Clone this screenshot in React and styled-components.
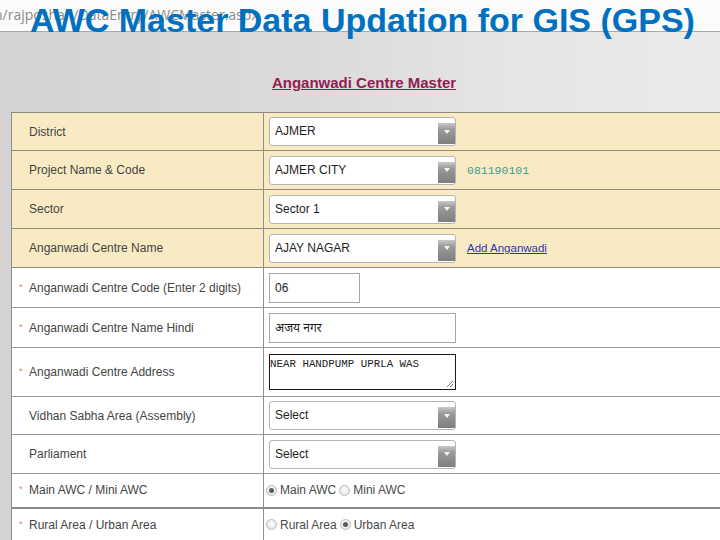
import styled, { createGlobalStyle } from 'styled-components';

const GlobalStyle = createGlobalStyle`
  html, body {
    margin: 0;
    padding: 0;
    width: 720px;
    height: 540px;
    overflow: hidden;
  }
  body {
    font-family: "Liberation Sans", Arial, sans-serif;
  }
`;

const Page = styled.div`
  position: relative;
  width: 720px;
  height: 540px;
  overflow: hidden;
  background: linear-gradient(90deg, #d4d2d2 0%, #dcdada 45%, #e6e5e5 70%, #ebebeb 100%);
`;

const AddressBar = styled.div`
  height: 31px;
  background: #fbfbfb;
  border-bottom: 1px solid #a9a9a9;
  display: flex;
  align-items: center;
  overflow: hidden;
`;

const Url = styled.span`
  font-family: "Open Sans", "Noto Sans", sans-serif;
  font-size: 14px;
  color: #8c8c8c;
  white-space: nowrap;
  margin-left: -6px;
  margin-top: -2px;
`;

// slide title laid over the screenshot
const Title = styled.h1`
  position: absolute;
  top: 3px;
  left: 30px;
  margin: 0;
  font-family: "Liberation Sans", Arial, sans-serif;
  font-weight: bold;
  font-size: 34px;
  line-height: 34px;
  color: #0070c0;
  white-space: nowrap;
`;

const Content = styled.div`
  padding: 42px 0 0 11px;
`;

const Heading = styled.a`
  display: block;
  text-align: center;
  padding-right: 3px;
  font-family: "Liberation Sans", Arial, sans-serif;
  font-weight: bold;
  font-size: 15px;
  line-height: 18px;
  color: #902052;
  text-decoration: underline;
  margin-bottom: 20px;
`;

const FormTable = styled.table`
  width: 760px;
  border-collapse: collapse;
  border-left: 1px solid #8c8c8c;
  border-top: 1px solid #8f8a80;
`;

const Row = styled.tr`
  height: ${p => p.$h}px;
  background: ${p => (p.$shade ? '#f8ebc4' : '#ffffff')};
  border-bottom: ${p => (p.$thick ? '2px solid #8a8a8a' : `1px solid ${p.$shade ? '#938b7c' : '#9a9a9a'}`)};
`;

const LabelCell = styled.td`
  width: 244px;
  padding: 0 0 0 7px;
  border-right: 1px solid #8f8f8f;
  font-size: 12px;
  color: #444;
  white-space: nowrap;
  vertical-align: middle;
`;

const Star = styled.span`
  display: inline-block;
  width: 10px;
  font-size: 9px;
  color: #d88080;
  vertical-align: 2px;
`;

const ValueCell = styled.td`
  padding: 0 0 0 ${p => p.$pad ?? 5}px;
  vertical-align: middle;
`;

const Inline = styled.div`
  display: flex;
  align-items: center;
  gap: 11px;
`;

const SelectBox = styled.div`
  box-sizing: border-box;
  width: 187px;
  height: 29px;
  border: 1px solid #b4b4b4;
  border-radius: 3px;
  background: #fff;
  display: flex;
  align-items: stretch;
  padding: 0 0 1px 5px;
`;

const SelectText = styled.span`
  flex: 1;
  display: flex;
  align-items: center;
  font-size: 12px;
  color: #1e1e1e;
`;

const SelectArrow = styled.span`
  width: 17px;
  margin-top: 5px;
  background: linear-gradient(#c9c9c9 0%, #9a9a9a 30%, #7e7e7e 100%);
  display: flex;
  align-items: center;
  justify-content: center;
  padding-bottom: 4px;

  &::after {
    content: '';
    border-left: 3px solid transparent;
    border-right: 3px solid transparent;
    border-top: 4px solid #f4f4f4;
  }
`;

const Code = styled.span`
  font-family: "Liberation Mono", "Courier New", monospace;
  font-size: 11.5px;
  color: #3c9c94;
`;

const AddLink = styled.a`
  font-size: 11.5px;
  color: #3030c0;
  text-decoration: underline;
`;

const TextInput = styled.div`
  box-sizing: border-box;
  width: ${p => p.$w}px;
  height: 30px;
  border: 1px solid #a6a6a6;
  background: #fff;
  display: flex;
  align-items: center;
  padding-left: 5px;
  font-family: "Liberation Sans", "Noto Sans", sans-serif;
  font-size: 12px;
  color: #1e1e1e;
`;

const AddressArea = styled.div`
  position: relative;
  box-sizing: border-box;
  width: 187px;
  height: 36px;
  border: 1px solid #1c1c1c;
  background: #fff;
  padding: 3px 0 0 0;
  font-family: "Liberation Mono", "Courier New", monospace;
  font-size: 10.8px;
  line-height: 13px;
  color: #222;
  white-space: nowrap;
`;

const Grip = styled.svg`
  position: absolute;
  right: 1px;
  bottom: 1px;
`;

const RadioGroup = styled.div`
  display: flex;
  align-items: center;
  font-size: 12px;
  color: #4a4a4a;
`;

const Radio = styled.span`
  box-sizing: border-box;
  width: 11px;
  height: 11px;
  border-radius: 50%;
  border: 1px solid #b9bcc0;
  background: radial-gradient(circle at 50% 40%, #ffffff 0%, #e6e8ea 70%, #d4d6d9 100%);
  margin-right: 3px;
  display: flex;
  align-items: center;
  justify-content: center;

  &::after {
    content: '';
    display: ${p => (p.$on ? 'block' : 'none')};
    width: 5px;
    height: 5px;
    border-radius: 50%;
    background: #5c5c5c;
  }
`;

const RadioLabel = styled.span`
  margin-right: 3px;
`;

const Select = ({ value }) => (
  <SelectBox>
    <SelectText>{value}</SelectText>
    <SelectArrow />
  </SelectBox>
);

const Label = ({ req, children }) => (
  <LabelCell>
    <Star>{req ? '*' : ''}</Star>
    {children}
  </LabelCell>
);

export default function App() {
  return (
    <>
      <GlobalStyle />
      <Page>
        <AddressBar>
          <Url>n/rajposhan/DataEntry/AWCMaster.aspx</Url>
        </AddressBar>
        <Title>AWC Master Data Updation for GIS (GPS)</Title>
        <Content>
          <Heading>Anganwadi Centre Master</Heading>
          <FormTable>
            <tbody>
              <Row $shade $h={38}>
                <Label>District</Label>
                <ValueCell><Select value="AJMER" /></ValueCell>
              </Row>
              <Row $shade $h={39}>
                <Label>Project Name &amp; Code</Label>
                <ValueCell>
                  <Inline>
                    <Select value="AJMER CITY" />
                    <Code>081190101</Code>
                  </Inline>
                </ValueCell>
              </Row>
              <Row $shade $h={39}>
                <Label>Sector</Label>
                <ValueCell><Select value="Sector 1" /></ValueCell>
              </Row>
              <Row $shade $h={39}>
                <Label>Anganwadi Centre Name</Label>
                <ValueCell>
                  <Inline>
                    <Select value="AJAY NAGAR" />
                    <AddLink>Add Anganwadi</AddLink>
                  </Inline>
                </ValueCell>
              </Row>
              <Row $h={40}>
                <Label req>Anganwadi Centre Code (Enter 2 digits)</Label>
                <ValueCell><TextInput $w={91}>06</TextInput></ValueCell>
              </Row>
              <Row $h={40}>
                <Label req>Anganwadi Centre Name Hindi</Label>
                <ValueCell><TextInput $w={187}>अजय नगर</TextInput></ValueCell>
              </Row>
              <Row $h={49}>
                <Label req>Anganwadi Centre Address</Label>
                <ValueCell $pad={5}>
                  <AddressArea>
                    NEAR HANDPUMP UPRLA WAS
                    <Grip width="8" height="8" viewBox="0 0 8 8">
                      <path d="M7 1 L1 7 M7 4 L4 7" stroke="#777" strokeWidth="1" />
                    </Grip>
                  </AddressArea>
                </ValueCell>
              </Row>
              <Row $h={38}>
                <Label>Vidhan Sabha Area (Assembly)</Label>
                <ValueCell><Select value="Select" /></ValueCell>
              </Row>
              <Row $h={39}>
                <Label>Parliament</Label>
                <ValueCell><Select value="Select" /></ValueCell>
              </Row>
              <Row $thick $h={34}>
                <Label req>Main AWC / Mini AWC</Label>
                <ValueCell $pad={2}>
                  <RadioGroup>
                    <Radio $on />
                    <RadioLabel>Main AWC</RadioLabel>
                    <Radio />
                    <RadioLabel>Mini AWC</RadioLabel>
                  </RadioGroup>
                </ValueCell>
              </Row>
              <Row $h={34}>
                <Label req>Rural Area / Urban Area</Label>
                <ValueCell $pad={2}>
                  <RadioGroup>
                    <Radio />
                    <RadioLabel>Rural Area</RadioLabel>
                    <Radio $on />
                    <RadioLabel>Urban Area</RadioLabel>
                  </RadioGroup>
                </ValueCell>
              </Row>
            </tbody>
          </FormTable>
        </Content>
      </Page>
    </>
  );
}
